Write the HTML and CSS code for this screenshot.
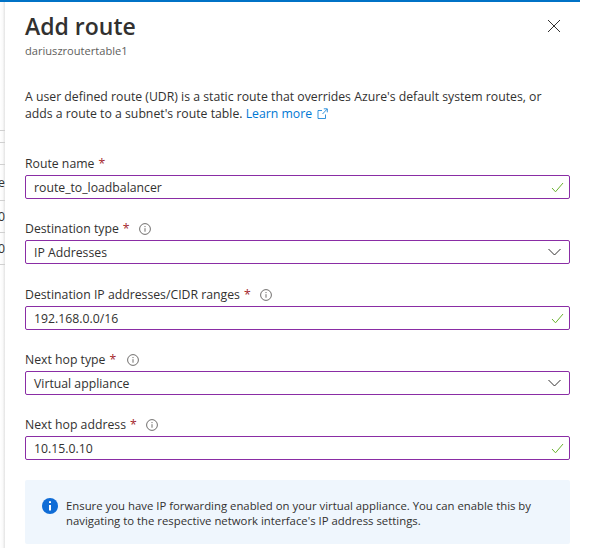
FILE: index.html
```html
<!DOCTYPE html>
<html lang="en">
<head>
  <meta charset="UTF-8" />
  <meta name="viewport" content="width=device-width, initial-scale=1" />
  <title>Add route</title>
  <link rel="stylesheet" href="styles.css">
</head>
<body>
  <div class="blade-frame">
    <aside class="behind">
      <div class="behind-row h-top"></div>
      <div class="behind-row h-sub"></div>
      <div class="behind-row h-head"></div>
      <div class="behind-row h-name"><span>e</span></div>
      <div class="behind-row h-cell"><span>0.</span></div>
      <div class="behind-row h-cell"><span>0.</span></div>
    </aside>
    <main class="blade">
      <header class="blade-head">
        <div>
          <h1>Add route</h1>
          <p class="subtitle">dariuszroutertable1</p>
        </div>
        <svg class="close" width="14" height="14" viewBox="0 0 14 14"><path d="M1 1l12 12M13 1L1 13" /></svg>
      </header>
      <p class="intro">A user defined route (UDR) is a static route that overrides Azure's default system routes, or adds a route to a subnet's route table. <a href="#">Learn more <svg class="ext" width="11" height="11" viewBox="0 0 11 11"><path d="M5 2.500H1v8h7.500V6.500M5.500 6L10 1.200M6.800 .8H10.300V4.300" /></svg></a></p>

      <form class="fields">
        <div class="field">
          <label>Route name <b>*</b></label>
          <div class="input"><span>route_to_loadbalancer</span><svg class="check" width="13" height="11" viewBox="0 0 13 11"><path d="M1 6l3.500 3.800L12 1" /></svg></div>
        </div>
        <div class="field">
          <label>Destination type <b>*</b> <svg class="info" width="12" height="12" viewBox="0 0 12 12"><circle cx="6" cy="6" r="5.400" /><path d="M6 5.200v3.500M6 3v1.100" /></svg></label>
          <div class="input"><span>IP Addresses</span><svg class="chev" width="13" height="8" viewBox="0 0 13 8"><path d="M.5 1l6 6 6-6" /></svg></div>
        </div>
        <div class="field field-ip">
          <label>Destination IP addresses/CIDR ranges <b>*</b> <svg class="info" width="12" height="12" viewBox="0 0 12 12"><circle cx="6" cy="6" r="5.400" /><path d="M6 5.200v3.500M6 3v1.100" /></svg></label>
          <div class="input"><span>192.168.0.0/16</span><svg class="check" width="13" height="11" viewBox="0 0 13 11"><path d="M1 6l3.500 3.800L12 1" /></svg></div>
        </div>
        <div class="field">
          <label>Next hop type <b>*</b> <svg class="info info-hop" width="12" height="12" viewBox="0 0 12 12"><circle cx="6" cy="6" r="5.400" /><path d="M6 5.200v3.500M6 3v1.100" /></svg></label>
          <div class="input"><span>Virtual appliance</span><svg class="chev" width="13" height="8" viewBox="0 0 13 8"><path d="M.5 1l6 6 6-6" /></svg></div>
        </div>
        <div class="field">
          <label>Next hop address <b>*</b> <svg class="info" width="12" height="12" viewBox="0 0 12 12"><circle cx="6" cy="6" r="5.400" /><path d="M6 5.200v3.500M6 3v1.100" /></svg></label>
          <div class="input"><span>10.15.0.10</span><svg class="check" width="13" height="11" viewBox="0 0 13 11"><path d="M1 6l3.500 3.800L12 1" /></svg></div>
        </div>
      </form>

      <div class="notice">
        <svg width="16" height="16" viewBox="0 0 16 16"><circle cx="8" cy="8" r="8" fill="#0f6cd6" /><path d="M8 7v5.500M8 3.200v1.900" stroke="#fff" stroke-width="2" /></svg>
        <p>Ensure you have IP forwarding enabled on your virtual appliance. You can enable this by navigating to the respective network interface's IP address settings.</p>
      </div>
    </main>
  </div>
</body>
</html>
```

FILE: styles.css
```css
* {
  margin: 0; padding: 0; box-sizing: border-box;
  font-family: 'Open Sans', 'Noto Sans', sans-serif;
}
body {
  background: #fff;
  color: #323130;
}
.blade-frame {
  width: 580px;
  height: 548px;
  display: flex;
  border-top: 2px solid #0072c6;
  overflow: hidden;
}
/* the page behind the blade */
.behind {
  width: 5px;
  flex: none;
  background: linear-gradient(90deg, #fff, #fafafa 50%, #e4e4e4);
  overflow: hidden;
  font-size: 12.25px;
  line-height: 16px;
}
.behind-row { border-bottom: 1px solid #d0d0d0; }
.h-top { height: 129px; }
.h-sub { height: 12px; }
.h-head { height: 22px; }
.h-name { height: 36px; padding-top: 10px; }
.h-cell { height: 32px; padding-top: 8px; }
.behind-row span { display: block; width: 5px; overflow: hidden; direction: rtl; }
/* blade */
.blade {
  flex: 1;
  padding: 0 10px 0 20px;
  background: #fff;
}
.blade-head {
  display: flex;
  justify-content: space-between;
  align-items: flex-start;
  height: 64px;
}
h1 {
  font-size: 23px;
  font-weight: 600;
  line-height: 32px;
  margin-top: 8px;
}
.subtitle {
  font-size: 11.1px;
  line-height: 16px;
  color: #605e5c;
  margin-top: 1px;
}
.close { margin: 17px 9px 0 0; }
.close path { fill: none; stroke: #323130; stroke-width: 1; }
.intro {
  font-size: 12.25px;
  line-height: 17px;
  margin-top: 22px;
}
.intro a { color: #0078d4; text-decoration: none; }
.ext { vertical-align: -1px; margin-left: 2px; }
.ext path { fill: none; stroke: #0078d4; stroke-width: .8; }
.fields {
  display: flex;
  flex-direction: column;
  gap: 19px;
  margin-top: 31px;
}
.field-ip { margin-top: 1px; }
.field label {
  display: flex;
  align-items: center;
  gap: 4px;
  font-size: 12.25px;
  line-height: 18px;
  height: 22px;
}
.field label b {
  color: #a4262c;
  font-weight: 400;
}
.info { margin-left: 5px; }
.info-hop { margin-left: 7px; }
.info circle, .info path { fill: none; stroke: #605e5c; stroke-width: .9; }
.input {
  display: flex;
  align-items: center;
  justify-content: space-between;
  height: 24px;
  padding: 0 5px 0 8px;
  border: 1px solid #8a2da5;
  border-radius: 2px;
  font-size: 12.25px;
}
.check path { fill: none; stroke: #6bb32f; stroke-width: 1; }
.chev { margin-right: 3px; }
.chev path { fill: none; stroke: #323130; stroke-width: 1; }
.notice {
  display: flex;
  align-items: flex-start;
  gap: 8px;
  height: 64px;
  margin-top: 20px;
  padding: 18px 17px 0;
  background: #eff6fd;
  border-radius: 2px;
}
.notice svg { flex: none; }
.notice p {
  font-size: 11.35px;
  line-height: 15px;
}
```
